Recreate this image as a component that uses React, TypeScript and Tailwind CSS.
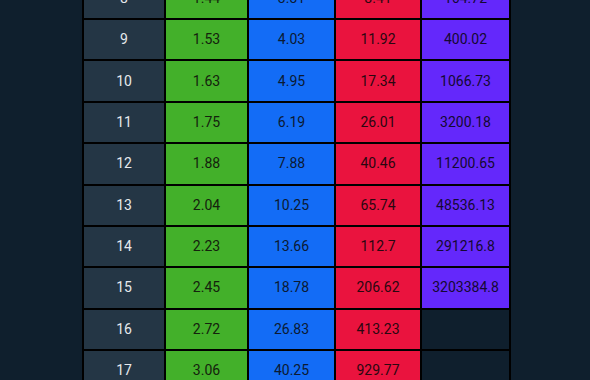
const rows: [number, string, string, string, string | null][] = [
  [8, '1.44', '3.31', '8.41', '164.72'],
  [9, '1.53', '4.03', '11.92', '400.02'],
  [10, '1.63', '4.95', '17.34', '1066.73'],
  [11, '1.75', '6.19', '26.01', '3200.18'],
  [12, '1.88', '7.88', '40.46', '11200.65'],
  [13, '2.04', '10.25', '65.74', '48536.13'],
  [14, '2.23', '13.66', '112.7', '291216.8'],
  [15, '2.45', '18.78', '206.62', '3203384.8'],
  [16, '2.72', '26.83', '413.23', null],
  [17, '3.06', '40.25', '929.77', null],
]

const cell = 'h-[39.375px] flex items-center justify-center text-[14px]'

export default function App() {
  return (
    <div
      className="w-[590px] h-[380px] overflow-hidden bg-[#0f1f2d]"
      style={{ fontFamily: 'Roboto, "Liberation Sans", sans-serif' }}
    >
      <div className="ml-[82px] -mt-[23.375px] w-fit grid grid-cols-[80px_81px_85px_84px_87px] gap-[2px] p-[2px] bg-black">
        {rows.map(([n, a, b, c, d]) => (
          <div key={n} className="contents">
            <div className={`${cell} bg-[#243645] text-[#e6e9ec]`}>{n}</div>
            <div className={`${cell} bg-[#43b02a] text-[#14220d]`}>{a}</div>
            <div className={`${cell} bg-[#136cf6] text-[#0b1a33]`}>{b}</div>
            <div className={`${cell} bg-[#ea133e] text-[#2a0710]`}>{c}</div>
            {d ? (
              <div className={`${cell} bg-[#6428fb] text-[#150833]`}>{d}</div>
            ) : (
              <div className={`${cell} bg-[#0f1f2d]`} />
            )}
          </div>
        ))}
      </div>
    </div>
  )
}
